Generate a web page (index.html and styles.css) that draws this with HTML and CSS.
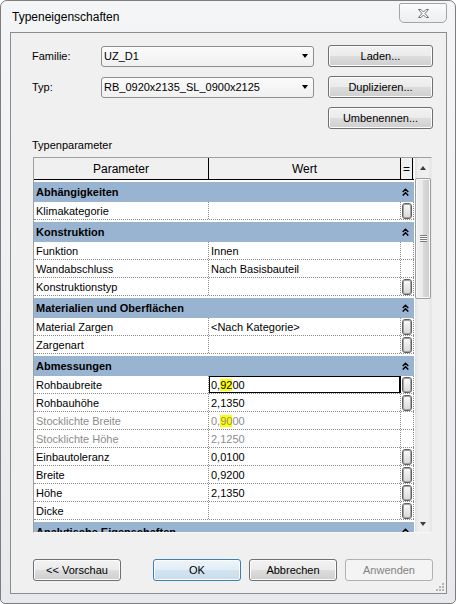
FILE: index.html
```html
<!DOCTYPE html>
<html lang="de">
<head>
    <meta charset="UTF-8">
    <title>Typeneigenschaften</title>
    <link rel="stylesheet" href="styles.css">
</head>
<body>
<div class="window">
    <div class="titlebar">
        <span class="title">Typeneigenschaften</span>
        <div class="close-btn">
            <svg width="11" height="9" viewBox="0 0 11 9"><polygon points="0.5,0.5 3,0.5 5.5,3 8,0.5 10.5,0.5 7,4.5 10.5,8.5 8,8.5 5.5,6 3,8.5 0.5,8.5 4,4.5" fill="#fff" stroke="#707070" stroke-width="1" stroke-linejoin="round"/></svg>
        </div>
    </div>

    <div class="client">
        <div class="form">
            <label>Familie:</label>
            <div class="combo"><span>UZ_D1</span><i class="combo-arrow"></i></div>
            <button class="btn">Laden...</button>

            <label>Typ:</label>
            <div class="combo"><span>RB_0920x2135_SL_0900x2125</span><i class="combo-arrow"></i></div>
            <button class="btn">Duplizieren...</button>

            <button class="btn third">Umbenennen...</button>
        </div>

        <div class="section-label">Typenparameter</div>

        <div class="grid">
            <div class="table">
                <div class="head">
                    <div class="hc param">Parameter</div>
                    <div class="hc val">Wert</div>
                    <div class="hc eq">=</div>
                </div>
                <div class="body">
                    <div class="group"><span>Abhängigkeiten</span><i class="chev"></i></div>
                    <div class="row"><div class="c param">Klimakategorie</div><div class="c val"></div><div class="c bc"><i class="mini"></i></div></div>

                    <div class="group"><span>Konstruktion</span><i class="chev"></i></div>
                    <div class="row"><div class="c param">Funktion</div><div class="c val">Innen</div><div class="c bc"></div></div>
                    <div class="row"><div class="c param">Wandabschluss</div><div class="c val">Nach Basisbauteil</div><div class="c bc"></div></div>
                    <div class="row"><div class="c param">Konstruktionstyp</div><div class="c val"></div><div class="c bc"><i class="mini"></i></div></div>

                    <div class="group"><span>Materialien und Oberflächen</span><i class="chev"></i></div>
                    <div class="row"><div class="c param">Material Zargen</div><div class="c val">&lt;Nach Kategorie&gt;</div><div class="c bc"><i class="mini"></i></div></div>
                    <div class="row"><div class="c param">Zargenart</div><div class="c val"></div><div class="c bc"><i class="mini"></i></div></div>

                    <div class="group"><span>Abmessungen</span><i class="chev"></i></div>
                    <div class="row"><div class="c param">Rohbaubreite</div><div class="c val edit">0,<span class="hl">92</span>00</div><div class="c bc"><i class="mini"></i></div></div>
                    <div class="row"><div class="c param">Rohbauhöhe</div><div class="c val">2,1350</div><div class="c bc"><i class="mini"></i></div></div>
                    <div class="row ro"><div class="c param">Stocklichte Breite</div><div class="c val">0,<span class="hl">90</span>00</div><div class="c bc"></div></div>
                    <div class="row ro"><div class="c param">Stocklichte Höhe</div><div class="c val">2,1250</div><div class="c bc"></div></div>
                    <div class="row"><div class="c param">Einbautoleranz</div><div class="c val">0,0100</div><div class="c bc"><i class="mini"></i></div></div>
                    <div class="row"><div class="c param">Breite</div><div class="c val">0,9200</div><div class="c bc"><i class="mini"></i></div></div>
                    <div class="row"><div class="c param">Höhe</div><div class="c val">2,1350</div><div class="c bc"><i class="mini"></i></div></div>
                    <div class="row"><div class="c param">Dicke</div><div class="c val"></div><div class="c bc"><i class="mini"></i></div></div>

                    <div class="group"><span>Analytische Eigenschaften</span><i class="chev"></i></div>
                </div>
            </div>
            <div class="scrollbar">
                <div class="sb-arrow"><i class="tri up"></i></div>
                <div class="sb-thumb"><i class="sb-grip"></i></div>
                <div class="sb-track"></div>
                <div class="sb-arrow down"><i class="tri dn"></i></div>
            </div>
        </div>

        <div class="footer">
            <button class="btn">&lt;&lt; Vorschau</button>
            <button class="btn default">OK</button>
            <button class="btn">Abbrechen</button>
            <button class="btn disabled">Anwenden</button>
        </div>

        <svg class="size-grip" width="9" height="9" viewBox="0 0 9 9">
            <rect x="6" y="0" width="2" height="2" fill="#b5b5b5"/>
            <rect x="3" y="3" width="2" height="2" fill="#b5b5b5"/>
            <rect x="6" y="3" width="2" height="2" fill="#b5b5b5"/>
            <rect x="0" y="6" width="2" height="2" fill="#b5b5b5"/>
            <rect x="3" y="6" width="2" height="2" fill="#b5b5b5"/>
            <rect x="6" y="6" width="2" height="2" fill="#b5b5b5"/>
        </svg>
    </div>
</div>
</body>
</html>
```

FILE: styles.css
```css
* {
    box-sizing: border-box;
}
body {
    margin: 0;
    background: #fff;
    font-family: 'Liberation Sans', Arial, sans-serif;
    font-size: 11px;
    color: #000;
}
.window {
    width: 456px;
    height: 604px;
    border: 1px solid #7d7d7d;
    border-radius: 7px 7px 5px 5px;
    padding: 0 8px 9px 9px;
    background: linear-gradient(to bottom, #f4f5f7, #e7e9ec);
    display: flex;
    flex-direction: column;
}
.titlebar {
    height: 31px;
    display: flex;
    align-items: flex-start;
}
.title {
    font-size: 12px;
    line-height: 16px;
    margin: 8px 0 0 2px;
}
.close-btn {
    margin-left: auto;
    margin-top: 2px;
    width: 48px;
    height: 20px;
    border: 1px solid #a2a5aa;
    border-radius: 2px 2px 5px 5px;
    background: linear-gradient(to bottom, #fbfbfb, #eceef0);
    display: flex;
    align-items: center;
    justify-content: center;
}
.client {
    position: relative;
    height: 562px;
    border: 1px solid #8c8c8c;
    background: #f0f0f0;
}

/* top form */
.form {
    display: grid;
    grid-template-columns: 69px 213px 119px;
    grid-auto-rows: 22px;
    row-gap: 9px;
    padding: 12px 0 0 21px;
}
.form label {
    align-self: center;
}
.form .btn {
    justify-self: end;
    width: 105px;
}
.form .third {
    grid-column: 3;
}
.combo {
    align-self: center;
    height: 21px;
    border: 1px solid #8e8e8e;
    border-radius: 3px;
    background: linear-gradient(to bottom, #fbfbfb, #f0f0f0);
    display: flex;
    align-items: center;
    padding: 0 5px 0 2px;
}
.combo span {
    flex: 1;
}
.combo-arrow {
    width: 0;
    height: 0;
    border-left: 3.5px solid transparent;
    border-right: 3.5px solid transparent;
    border-top: 4px solid #000;
}

.btn {
    height: 22px;
    border: 1px solid #707070;
    border-radius: 3px;
    background: linear-gradient(to bottom, #f2f2f2 0%, #ebebeb 50%, #dddddd 50%, #cfcfcf 100%);
    box-shadow: inset 0 0 0 1px #fcfcfc;
    font-family: inherit;
    font-size: 11px;
    color: #000;
    padding: 0;
}
.btn.default {
    border-color: #3c7fb1;
    background: linear-gradient(to bottom, #edf5fb 0%, #e1edf6 50%, #d3e4f1 50%, #c8dcec 100%);
}
.btn.disabled {
    border-color: #adb2b5;
    background: #f4f4f4;
    box-shadow: none;
    color: #838383;
}

.section-label {
    padding-left: 21px;
    margin-top: 9px;
    line-height: 14px;
    margin-bottom: 5px;
}

/* parameter grid */
.grid {
    margin-left: 22px;
    width: 399px;
    height: 376px;
    border: 1px solid;
    border-color: #a0a0a0 #e8e8e8 #f8f8f8 #a0a0a0;
    background: #fff;
    display: flex;
}
.table {
    width: 380px;
    margin-right: 1px;
    display: flex;
    flex-direction: column;
    overflow: hidden;
}
.head {
    height: 22px;
    flex-shrink: 0;
    display: flex;
    background: #f0f0f0;
    border-bottom: 1px solid #000;
}
.hc {
    border-right: 1px solid #000;
    display: flex;
    align-items: center;
    justify-content: center;
    font-size: 12px;
}
.hc.param {
    width: 175px;
}
.hc.val {
    width: 192px;
}
.hc.eq {
    width: 12px;
}
.body {
    flex: 1;
    overflow: hidden;
}
.group {
    height: 22px;
    border-top: 2px solid #fff;
    background: #99b4d1;
    font-weight: bold;
    display: flex;
    align-items: center;
    padding-left: 2px;
}
.group span {
    flex: 1;
}
.chev {
    width: 13px;
    height: 8px;
    background: url("data:image/svg+xml,%3Csvg xmlns='http://www.w3.org/2000/svg' width='7' height='8'%3E%3Cpath d='M0.7 4 L3.5 1.2 L6.3 4 M0.7 7.6 L3.5 4.8 L6.3 7.6' fill='none' stroke='%23000' stroke-width='1.4'/%3E%3C/svg%3E") no-repeat 1px 0;
}
.row {
    height: 18px;
    display: flex;
    border-bottom: 1px dotted #8a8a8a;
}
.c {
    border-right: 1px dotted #8a8a8a;
    display: flex;
    align-items: center;
    padding-left: 2px;
    white-space: nowrap;
    overflow: hidden;
}
.c.param {
    width: 175px;
}
.c.val {
    width: 192px;
}
.c.bc {
    width: 13px;
    padding: 0;
    justify-content: center;
}
.c.edit {
    box-shadow: inset 0 0 0 1px #000;
    border-right-color: #000;
    border-right-style: solid;
}
.row.ro .c {
    color: #8c8c8c;
}
.hl {
    background: #ffff00;
}
.mini {
    width: 10px;
    height: 16px;
    border: 1px solid #5f5f5f;
    border-radius: 3px;
    box-shadow: inset 0 0 0 1px #a5a5a5;
    background: linear-gradient(to bottom, #fafafa, #d8d8d8);
}

/* scrollbar */
.scrollbar {
    width: 16px;
    display: flex;
    flex-direction: column;
    background: linear-gradient(to right, #e0e0e0, #eeeeee 20%, #f0f0f0 80%, #e6e6e6);
}
.sb-arrow {
    height: 20px;
    display: flex;
    align-items: center;
    justify-content: center;
}
.sb-arrow.down {
    height: 17px;
}
.tri {
    width: 0;
    height: 0;
    border-left: 3.5px solid transparent;
    border-right: 3.5px solid transparent;
}
.tri.up {
    border-bottom: 4px solid #3c3c3c;
}
.tri.dn {
    border-top: 4px solid #3c3c3c;
}
.sb-thumb {
    height: 121px;
    border: 1px solid #9e9e9e;
    border-radius: 2px;
    box-shadow: inset 0 0 0 1px #f8f8f8;
    background: linear-gradient(to right, #f3f3f3 0%, #e9e9e9 50%, #d9d9d9 50%, #cdcdcd 100%);
    display: flex;
    align-items: center;
    justify-content: center;
}
.sb-grip {
    width: 7px;
    height: 7px;
    background: repeating-linear-gradient(to bottom, #7d7d7d 0 1px, #f6f6f6 1px 2px);
}
.sb-track {
    flex: 1;
}

/* footer buttons */
.footer {
    display: flex;
    margin-top: 26px;
    padding-left: 22px;
}
.footer .btn {
    width: 88px;
    margin-left: 8px;
}
.footer .btn:first-child {
    margin-left: 0;
}
.footer .btn.default {
    margin-left: 32px;
}
.size-grip {
    position: absolute;
    right: 1px;
    bottom: 1px;
}
```
